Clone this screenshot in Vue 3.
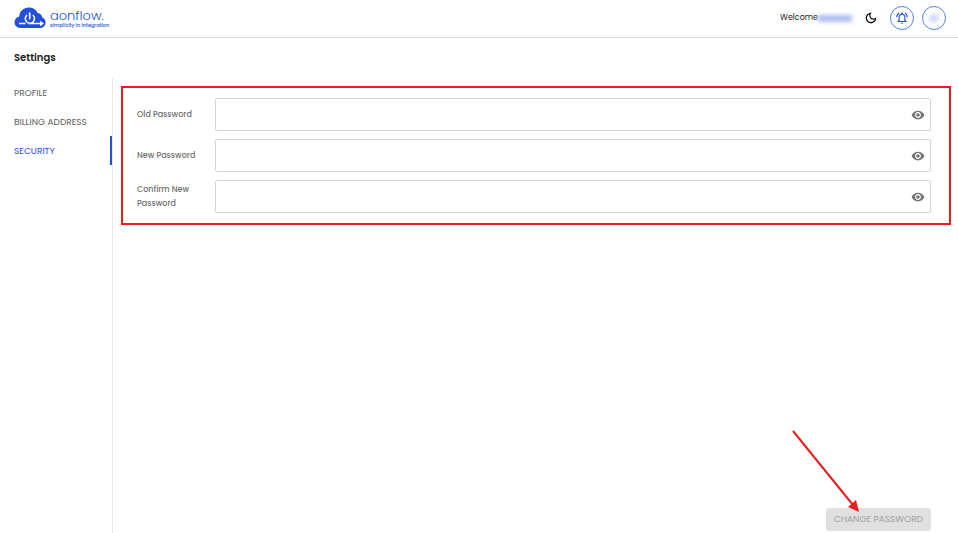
<template>
  <div class="page">
    <header class="topbar">
      <a href="#" class="brand" aria-label="aonflow.">
        <svg class="brand-mark" viewBox="0 0 32 22" aria-hidden="true">
          <path
            fill="#2450d8"
            d="M7 21C3 21 .5 18.400 .5 15.200c0-2.900 2-5.200 4.800-5.700C5.500 4.300 9.700.6 14.800.6c4 0 7.300 2.100 8.900 5.500 2.500.3 4.300 2 4.600 4.400 2 .8 3.300 2.600 3.300 4.900 0 3.200-2.500 5.600-5.900 5.600z"
          />
          <path
            fill="none"
            stroke="#fff"
            stroke-width="1.500"
            d="M5 16.500h6.500M14 16.500h13M13 8a4.600 4.600 0 1 0 5.800 0"
          />
          <path fill="none" stroke="#fff" stroke-width="1.700" stroke-linecap="round" d="M15.700 6.200v5.400" />
          <path fill="#fff" d="M26 13.700l4 2.800-4 2.800z" />
        </svg>
        <span class="brand-text">
          <span class="brand-name">aonflow.</span>
          <span class="brand-tagline">simplicity in integration</span>
        </span>
      </a>

      <div class="account">
        <p class="welcome">Welcome<span class="user-name"></span></p>
        <button type="button" class="theme-btn" aria-label="Dark mode">
          <svg viewBox="0 0 24 24" aria-hidden="true"><path :d="icons.moon" /></svg>
        </button>
        <button type="button" class="round-btn" aria-label="Notifications">
          <svg viewBox="0 0 24 24" aria-hidden="true"><path :d="icons.bell" /></svg>
        </button>
        <button type="button" class="round-btn" aria-label="Account">
          <span class="initials"></span>
        </button>
      </div>
    </header>

    <h1 class="title">Settings</h1>

    <div class="content">
      <nav class="tabs">
        <a
          v-for="tab in tabs"
          :key="tab"
          href="#"
          class="tab"
          :class="{ active: tab === activeTab }"
          @click.prevent="activeTab = tab"
        >{{ tab }}</a>
      </nav>

      <form class="security" @submit.prevent>
        <div class="fields">
          <div v-for="field in fields" :key="field.id" class="field">
            <label :for="field.id">{{ field.label }}</label>
            <div class="input-box">
              <input
                :id="field.id"
                v-model="field.value"
                :type="field.visible ? 'text' : 'password'"
              />
              <button
                type="button"
                class="eye-btn"
                aria-label="Toggle visibility"
                @click="field.visible = !field.visible"
              >
                <svg viewBox="0 0 24 24" aria-hidden="true"><path :d="icons.eye" /></svg>
              </button>
            </div>
          </div>
        </div>

        <div class="actions">
          <button type="submit" class="submit-btn" :disabled="!canSubmit">CHANGE PASSWORD</button>
          <svg class="pointer" viewBox="0 0 70 84" aria-hidden="true">
            <path d="M2 2l60 74" fill="none" stroke="#e81e1e" stroke-width="2" />
            <path d="M68 83l-11-5 8-7z" fill="#e81e1e" />
          </svg>
        </div>
      </form>
    </div>
  </div>
</template>

<script setup>
import { computed, reactive, ref } from 'vue';

const tabs = ['PROFILE', 'BILLING ADDRESS', 'SECURITY'];
const activeTab = ref('SECURITY');

const fields = reactive([
  { id: 'old-password', label: 'Old Password', value: '', visible: false },
  { id: 'new-password', label: 'New Password', value: '', visible: false },
  { id: 'confirm-password', label: 'Confirm New Password', value: '', visible: false }
]);

// all three filled in and the new ones equal
const canSubmit = computed(() =>
  fields.every((field) => field.value) && fields[1].value === fields[2].value
);

const icons = {
  moon: 'M9.37 5.51c-.18.64-.27 1.31-.27 1.99 0 4.08 3.32 7.4 7.4 7.4.68 0 1.35-.09 1.99-.27C17.45 17.19 14.93 19 12 19c-3.86 0-7-3.14-7-7 0-2.93 1.81-5.45 4.37-6.49zM12 3c-4.97 0-9 4.03-9 9s4.03 9 9 9 9-4.03 9-9c0-.46-.04-.92-.1-1.36-.98 1.37-2.58 2.26-4.4 2.26-2.98 0-5.4-2.42-5.4-5.4 0-1.81.89-3.42 2.26-4.4-.44-.06-.9-.1-1.36-.1z',
  bell: 'M12 22c1.1 0 2-.9 2-2h-4c0 1.1.9 2 2 2zm6-6v-5c0-3.07-1.63-5.64-4.5-6.32V4c0-.83-.67-1.5-1.5-1.5s-1.5.67-1.5 1.5v.68C7.64 5.36 6 7.92 6 11v5l-2 2v1h16v-1l-2-2zm-2 1H8v-6c0-2.48 1.51-4.5 4-4.5s4 2.02 4 4.5v6zM7.58 4.08L6.15 2.65C3.75 4.48 2.17 7.3 2.03 10.5h2c.15-2.65 1.51-4.97 3.55-6.42zm12.39 6.42h2c-.15-3.2-1.73-6.02-4.12-7.85l-1.42 1.43c2.02 1.45 3.39 3.77 3.54 6.42z',
  eye: 'M12 4.5C7 4.5 2.73 7.61 1 12c1.73 4.39 6 7.5 11 7.5s9.27-3.11 11-7.5c-1.73-4.39-6-7.5-11-7.5zM12 17c-2.76 0-5-2.24-5-5s2.24-5 5-5 5 2.24 5 5-2.24 5-5 5zm0-8c-1.66 0-3 1.34-3 3s1.34 3 3 3 3-1.34 3-3-1.34-3-3-3z'
};
</script>

<style>
body {
  margin: 0;
  background: #fff;
}
</style>

<style scoped>
.page {
  display: flex;
  flex-direction: column;
  min-height: 100vh;
  font-family: Poppins, Inter, "Liberation Sans", sans-serif;
  font-size: 8px;
  line-height: 14px;
  color: #222;
}

button,
input {
  font: inherit;
}

button {
  padding: 0;
  border: none;
  background: none;
  cursor: pointer;
}

svg {
  display: block;
}

/* header */
.topbar {
  display: flex;
  align-items: center;
  justify-content: space-between;
  height: 36px;
  padding: 0 12px 1px 14px;
  border-bottom: 1px solid #dcdcdc;
}

.brand {
  display: flex;
  align-items: center;
  gap: 4px;
  color: #2450d8;
  text-decoration: none;
}

.brand-mark {
  width: 32px;
  height: 22px;
}

.brand-text {
  display: flex;
  flex-direction: column;
}

.brand-name {
  font-size: 13px;
  font-weight: 300;
  line-height: 15px;
}

.brand-tagline {
  font-size: 5px;
  font-weight: 500;
  line-height: 6px;
}

.account {
  display: flex;
  align-items: center;
  gap: 8px;
}

.welcome {
  display: flex;
  align-items: center;
  margin: 0;
}

.user-name {
  width: 34px;
  height: 7px;
  background: #b0bdf0;
  filter: blur(2px);
}

.theme-btn {
  display: flex;
  justify-content: center;
  width: 22px;
}

.theme-btn svg,
.round-btn svg,
.eye-btn svg {
  width: 14px;
  height: 14px;
  fill: currentColor;
}

.round-btn {
  display: flex;
  align-items: center;
  justify-content: center;
  box-sizing: border-box;
  width: 24px;
  height: 24px;
  border: 1px solid #5b7be2;
  border-radius: 50%;
  color: #2450d8;
}

.initials {
  width: 10px;
  height: 8px;
  border-radius: 4px;
  background: #d0d8f7;
  filter: blur(2px);
}

.title {
  margin: 0;
  padding: 13px 14px;
  font-size: 10px;
  font-weight: 600;
  line-height: 14px;
  color: #222;
}

/* settings body */
.content {
  display: flex;
  flex: 1;
}

.tabs {
  flex: 0 0 112px;
  border-right: 1px solid #e8e8e8;
}

.tab {
  display: block;
  padding: 1px 0 0 14px;
  font-size: 9px;
  line-height: 28px;
  color: #606060;
  text-decoration: none;
}

.tab.active {
  border-right: 2px solid #2450d8;
  color: #2450d8;
}

.security {
  display: flex;
  flex: 1;
  flex-direction: column;
  justify-content: space-between;
}

.fields {
  display: flex;
  flex-direction: column;
  gap: 8px;
  margin: 8px 7px 0 8px;
  padding: 10px 18px 10px 14px;
  border: 2px solid #e81e1e;
}

.field {
  display: flex;
  align-items: center;
}

.field label {
  flex: 0 0 78px;
  box-sizing: border-box;
  padding-right: 12px;
  font-weight: 500;
  color: #707070;
}

.input-box {
  display: flex;
  flex: 1;
  align-items: center;
  box-sizing: border-box;
  height: 33px;
  padding-right: 5px;
  border: 1px solid #d4d4d4;
  border-radius: 2px;
}

.input-box:focus-within {
  border-color: #2450d8;
}

.input-box input {
  flex: 1;
  min-width: 0;
  padding: 0 8px;
  border: none;
  outline: none;
  background: none;
}

.eye-btn {
  color: #757575;
}

.actions {
  position: relative;
  display: flex;
  justify-content: flex-end;
  padding: 0 27px 2px 0;
}

.submit-btn {
  padding: 4px 8px 5px;
  border-radius: 3px;
  background: #2450d8;
  font-size: 9px;
  color: #fff;
}

.submit-btn:disabled {
  background: #e0e0e0;
  color: #a0a0a0;
  cursor: default;
}

/* arrow lying over the button */
.pointer {
  position: absolute;
  right: 97px;
  bottom: 20px;
  width: 70px;
  height: 84px;
  pointer-events: none;
}
</style>
